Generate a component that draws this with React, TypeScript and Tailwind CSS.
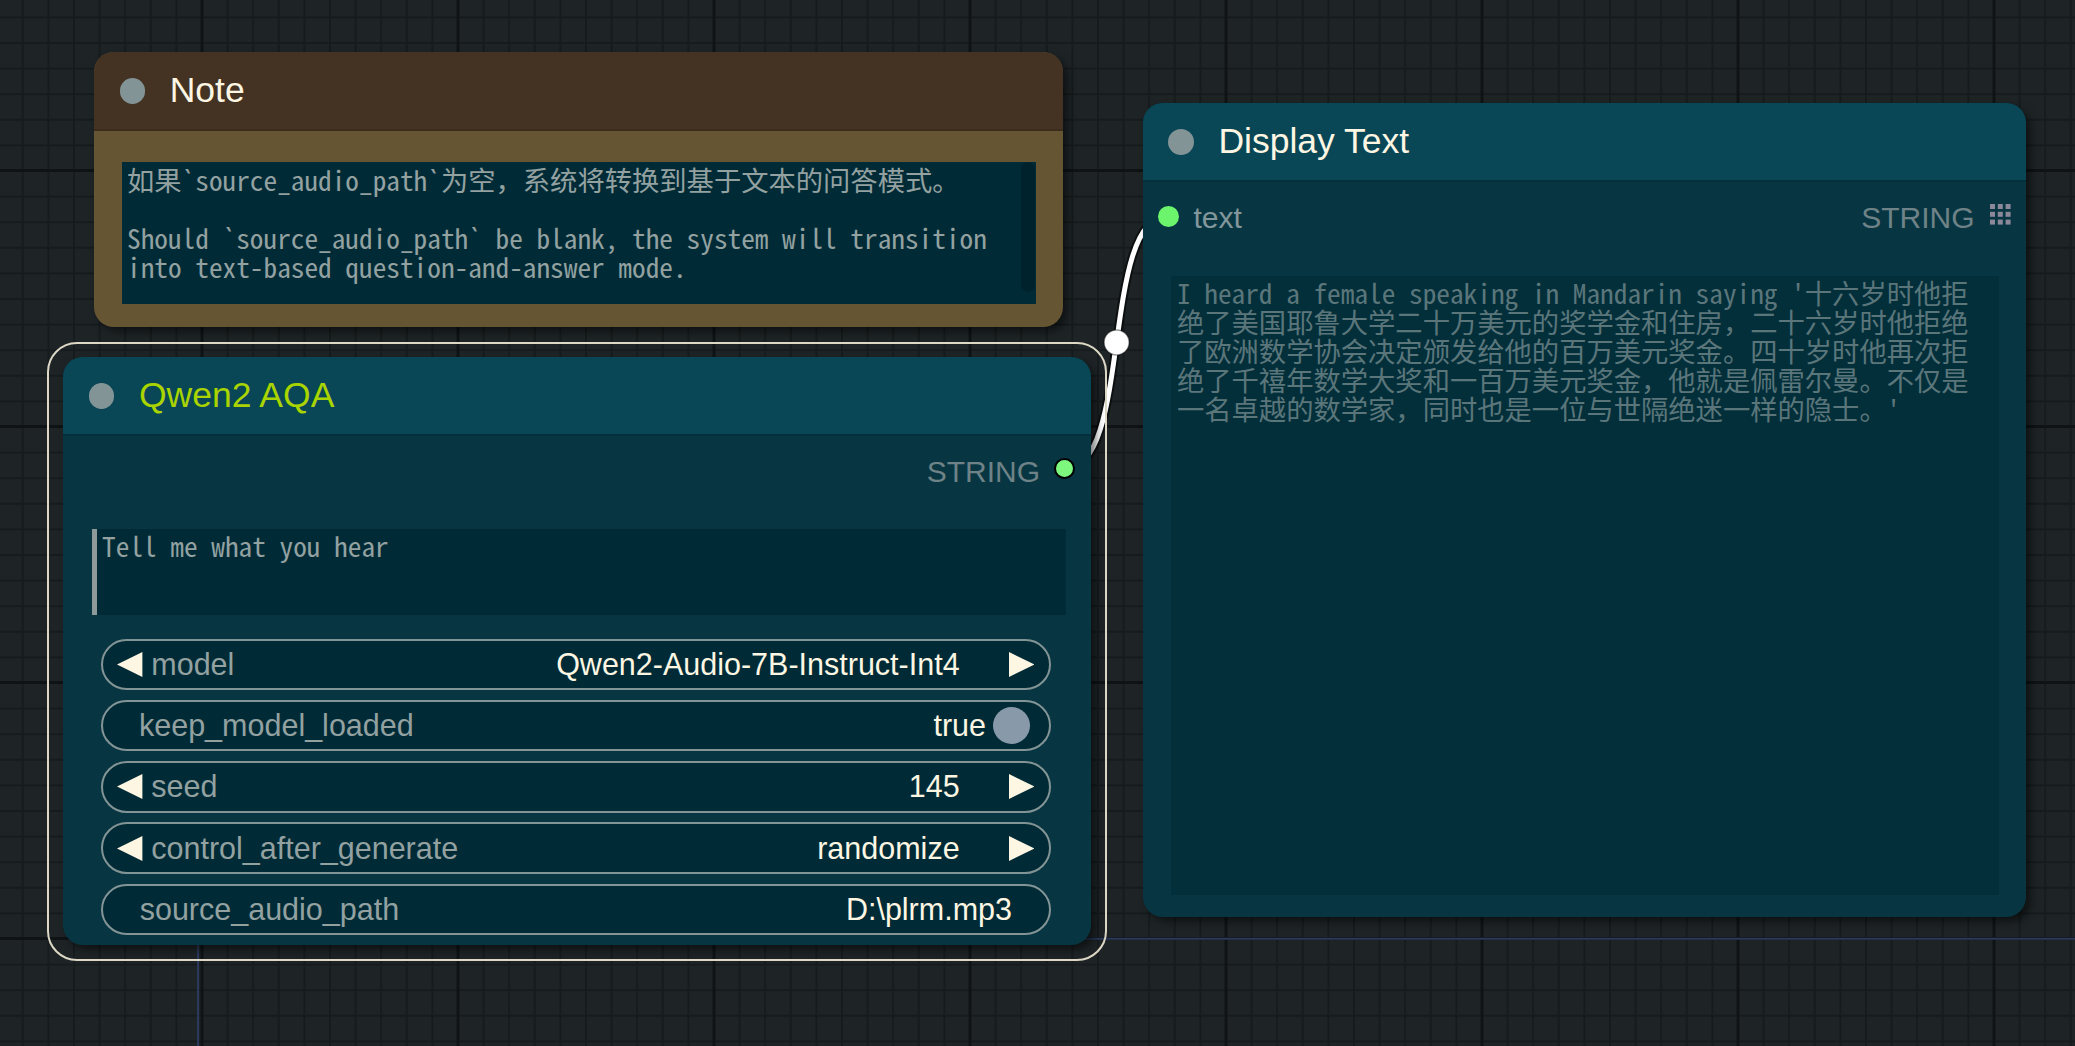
import React from "react";

const MONO = "font-['Noto_Sans_Mono_CJK_SC','Noto_Sans_CJK_SC','Liberation_Mono',monospace]";

function TriLeft() {
  return (
    <svg width="25.4" height="25" viewBox="0 0 25.4 25" className="shrink-0">
      <path d="M0 12.5 L25.4 0 L25.4 25 Z" fill="#fdf6e3" />
    </svg>
  );
}

function TriRight() {
  return (
    <svg width="25.4" height="25" viewBox="0 0 25.4 25" className="shrink-0">
      <path d="M25.4 12.5 L0 0 L0 25 Z" fill="#fdf6e3" />
    </svg>
  );
}

function GridIcon() {
  const cells = [0, 7.8, 15.6];
  return (
    <svg width="20.6" height="20.6" viewBox="0 0 20.6 20.6" className="shrink-0">
      {cells.map((y) =>
        cells.map((x) => <rect key={`${x}-${y}`} x={x} y={y} width="5" height="5" fill="#8a8899" />)
      )}
    </svg>
  );
}

function Header({ title, color, bg, line }: { title: string; color: string; bg: string; line: string }) {
  return (
    <div className={`h-[79px] shrink-0 flex items-center border-b-[2px] ${bg} ${line}`}>
      <div className="ml-[25.5px] w-[25.7px] h-[25.7px] rounded-full bg-[#839496] shrink-0" />
      <span className={`ml-[24.5px] text-[35.5px] leading-[41px] ${color}`}>{title}</span>
    </div>
  );
}

function ComboWidget({ label, value }: { label: string; value: string }) {
  return (
    <div className="h-[51.6px] shrink-0 rounded-full border-2 border-[#839496] bg-[#002b36] flex items-center pl-[14.6px] pr-[14.7px] text-[30.5px] leading-[35px]">
      <TriLeft />
      <span className="ml-[8.6px] text-[#93a1a1]">{label}</span>
      <span className="ml-auto mr-[49px] text-[#fdf6e3]">{value}</span>
      <TriRight />
    </div>
  );
}

function ToggleWidget({ label, value }: { label: string; value: string }) {
  return (
    <div className="h-[51.6px] shrink-0 rounded-full border-2 border-[#839496] bg-[#002b36] flex items-center pl-[36.3px] pr-[18.7px] text-[30.5px] leading-[35px]">
      <span className="text-[#93a1a1]">{label}</span>
      <span className="ml-auto text-[#fdf6e3]">{value}</span>
      <div className="ml-[7.4px] w-[36.6px] h-[36.6px] rounded-full bg-[#8899aa] shrink-0" />
    </div>
  );
}

function TextWidget({ label, value }: { label: string; value: string }) {
  return (
    <div className="h-[51.6px] shrink-0 rounded-full border-2 border-[#839496] bg-[#002b36] flex items-center pl-[37px] pr-[36.7px] text-[30.5px] leading-[35px]">
      <span className="text-[#93a1a1]">{label}</span>
      <span className="ml-auto text-[#fdf6e3]">{value}</span>
    </div>
  );
}

function Background() {
  return (
    <svg className="absolute inset-0" width="2075" height="1046" viewBox="0 0 2075 1046">
      <defs>
        <pattern id="gmin" x="21.8" y="16.4" width="25.6" height="25.6" patternUnits="userSpaceOnUse">
          <rect x="0" y="0" width="2" height="25.6" fill="#161b1d" />
          <rect x="0" y="0" width="25.6" height="2" fill="#161b1d" />
        </pattern>
        <pattern id="gmaj" x="-55.5" y="-87" width="256" height="256" patternUnits="userSpaceOnUse">
          <rect x="0" y="0" width="3" height="256" fill="#0f1315" />
          <rect x="0" y="0" width="256" height="3" fill="#0f1315" />
        </pattern>
      </defs>
      <rect x="0" y="0" width="2075" height="1046" fill="#1e2426" />
      <rect x="0" y="0" width="2075" height="1046" fill="url(#gmin)" />
      <rect x="0" y="0" width="2075" height="1046" fill="url(#gmaj)" />
      <line x1="198" y1="938.7" x2="2075" y2="938.7" stroke="#2b3a5c" strokeWidth="2" />
      <line x1="198" y1="938.7" x2="198" y2="1046" stroke="#2b3a5c" strokeWidth="2" />
      <path d="M1065 469 C1133 469, 1100 216, 1168 216" fill="none" stroke="rgba(0,0,0,0.55)" strokeWidth="9" />
      <path d="M1065 469 C1133 469, 1100 216, 1168 216" fill="none" stroke="#ffffff" strokeWidth="5" />
      <circle cx="1116.6" cy="342.4" r="12.5" fill="#ffffff" stroke="rgba(0,0,0,0.4)" strokeWidth="1.5" />
    </svg>
  );
}

function NoteNode() {
  return (
    <div className="absolute left-[94px] top-[52.3px] w-[968.7px] h-[275.2px] rounded-[20px] overflow-hidden bg-[#665533] shadow-[5px_5px_8px_rgba(0,0,0,0.5)] flex flex-col">
      <Header title="Note" color="text-[#fdf6e3]" bg="bg-[#443322]" line="border-[#3b2c1e]" />
      <div className="flex-1 pl-[28px] pr-[27px] pt-[30.7px] pb-[23.8px] flex">
        <div className="relative flex-1 bg-[#002b36]">
          <div className={`${MONO} text-[27.3px] leading-[29px] text-[#93a1a1] whitespace-pre pl-[5px] pt-[3px]`}>
            {"如果`source_audio_path`为空，系统将转换到基于文本的问答模式。\n\nShould `source_audio_path` be blank, the system will transition\ninto text-based question-and-answer mode."}
          </div>
          <div className="absolute right-[0.5px] top-[0.3px] w-[14.5px] h-[129.4px] rounded-full bg-[#00222c]" />
        </div>
      </div>
    </div>
  );
}

function QwenNode() {
  return (
    <>
      <div className="absolute left-[47.3px] top-[341.7px] w-[1060px] h-[619.5px] rounded-[30px] border-2 border-[#ddd8c6]" />
      <div className="absolute left-[63.3px] top-[357.3px] w-[1027.4px] h-[587.7px] rounded-[20px] overflow-hidden bg-[#073642] shadow-[5px_5px_8px_rgba(0,0,0,0.5)] flex flex-col">
        <Header title="Qwen2 AQA" color="text-[#a9d400]" bg="bg-[#094656]" line="border-[#052f3a]" />
        <div className="pt-[6.6px] flex flex-col">
          <div className="h-[52px] flex items-center justify-end pr-[15.4px]">
            <span className="mt-[5px] text-[30px] leading-[35px] text-[#6e8287]">STRING</span>
            <div className="ml-[14.3px] w-[21px] h-[21px] rounded-full bg-[#7ef77e] border-2 border-black" />
          </div>
          <div className="mt-[33.7px] ml-[28.3px] mr-[24.7px] h-[86.7px] bg-[#002b36] border-l-[5px] border-[#8e9a9a]">
            <div className={`${MONO} text-[27.3px] leading-[29px] text-[#93a1a1] whitespace-pre pl-[5.5px] pt-[2.5px]`}>
              Tell me what you hear
            </div>
          </div>
          <div className="mt-[23.3px] ml-[37.4px] mr-[40px] flex flex-col gap-[9.7px]">
            <ComboWidget label="model" value="Qwen2-Audio-7B-Instruct-Int4" />
            <ToggleWidget label="keep_model_loaded" value="true" />
            <ComboWidget label="seed" value="145" />
            <ComboWidget label="control_after_generate" value="randomize" />
            <TextWidget label="source_audio_path" value="D:\plrm.mp3" />
          </div>
        </div>
      </div>
    </>
  );
}

function DisplayNode() {
  const text =
    "I heard a female speaking in Mandarin saying '十六岁时他拒\n绝了美国耶鲁大学二十万美元的奖学金和住房，二十六岁时他拒绝\n了欧洲数学协会决定颁发给他的百万美元奖金。四十岁时他再次拒\n绝了千禧年数学大奖和一百万美元奖金，他就是佩雷尔曼。不仅是\n一名卓越的数学家，同时也是一位与世隔绝迷一样的隐士。'";
  return (
    <div className="absolute left-[1142.7px] top-[103.3px] w-[883.1px] h-[813.7px] rounded-[20px] overflow-hidden bg-[#073642] shadow-[5px_5px_8px_rgba(0,0,0,0.5)] flex flex-col">
      <Header title="Display Text" color="text-[#fdf6e3]" bg="bg-[#094656]" line="border-[#052f3a]" />
      <div className="h-[68px] shrink-0 flex items-center pl-[15.3px] pr-[15.1px]">
        <div className="w-[20.7px] h-[20.7px] rounded-full bg-[#6cf56c]" />
        <span className="ml-[14.8px] mt-[3px] text-[30px] leading-[35px] text-[#82969b]">text</span>
        <span className="ml-auto mt-[3px] text-[30px] leading-[35px] text-[#6e8287]">STRING</span>
        <div className="ml-[15.5px] -mt-[4px]">
          <GridIcon />
        </div>
      </div>
      <div className="flex-1 pt-[25.3px] pl-[28.3px] pr-[26.8px] pb-[22px] flex">
        <div className="flex-1 bg-[#002b36] opacity-60">
          <div className={`${MONO} text-[27.3px] leading-[29px] text-[#93a1a1] whitespace-pre pl-[6px] pt-[2px]`}>
            {text}
          </div>
        </div>
      </div>
    </div>
  );
}

export default function App() {
  return (
    <div className="relative w-[2075px] h-[1046px] overflow-hidden bg-[#1e2426] font-['Liberation_Sans',Arial,sans-serif]">
      <Background />
      <NoteNode />
      <QwenNode />
      <DisplayNode />
    </div>
  );
}
